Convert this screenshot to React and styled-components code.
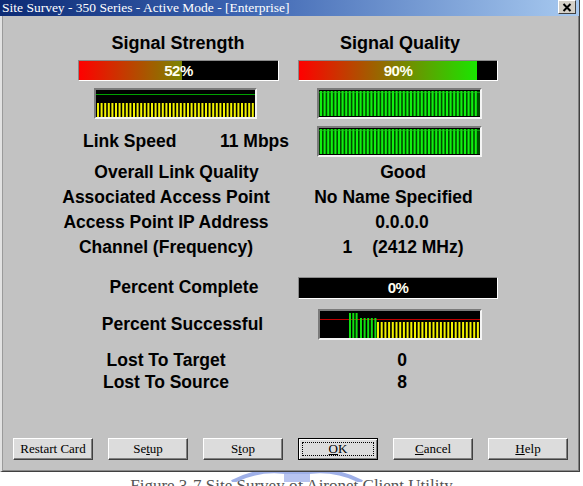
import React from 'react';
import styled, { createGlobalStyle, css } from 'styled-components';

const GlobalStyle = createGlobalStyle`
  html, body { margin: 0; padding: 0; background: #fff; width: 583px; height: 486px; overflow: hidden; }
  #root { width: 583px; height: 486px; }
`;

const Page = styled.div`
  width: 583px;
  height: 486px;
  display: flex;
  flex-direction: column;
  font-family: "Liberation Sans", Arial, sans-serif;
  color: #000;
`;

const Window = styled.div`
  width: 580px;
  height: 476px;
  box-sizing: border-box;
  display: flex;
  flex-direction: column;
  border-right: 1px solid #404040;
  box-shadow: inset -1px 0 0 #808080;
  background: #c2c2c2;
`;

const TitleBar = styled.div`
  height: 16px;
  flex: none;
  display: flex;
  align-items: center;
  justify-content: space-between;
  padding: 0 3px 0 2px;
  background: linear-gradient(to right, #0c2a74 0%, #3a62b0 40%, #a8caf0 100%);
`;

const TitleText = styled.span`
  font-family: "Liberation Serif", "Times New Roman", serif;
  font-size: 13.5px;
  line-height: 16px;
  color: #fff;
  white-space: nowrap;
`;

const CloseBox = styled.div`
  width: 18px;
  height: 14px;
  box-sizing: border-box;
  align-self: flex-start;
  display: flex;
  align-items: center;
  justify-content: center;
  background: #d4d0c8;
  border: 1px solid;
  border-color: #fff #404040 #404040 #fff;
`;

const Body = styled.div`
  flex: 1;
  display: flex;
  flex-direction: column;
  padding-top: 17px;
  border-left: 2px solid #e2e2e2;
  border-bottom: 1px solid #404040;
  box-shadow: inset 1px 0 0 #9a9a9a, inset 0 -1px 0 #8a8a8a;
`;

const SignalGrid = styled.div`
  margin-left: 56px;
  display: grid;
  grid-template-columns: 240px 200px;
  row-gap: 7px;
  align-items: center;
`;

const Heading = styled.div`
  font-size: 18px;
  font-weight: bold;
  line-height: 20px;
  text-align: center;
  padding-left: ${p => (p.$shift || 0) * 2}px;
`;

const Meter = styled.div`
  display: grid;
  width: ${p => p.$w}px;
  height: ${p => p.$h}px;
  box-sizing: border-box;
  margin-left: ${p => p.$inset || 0}px;
  background: #000;
  border: 1px solid;
  border-color: #8a8a8a #fff #fff #8a8a8a;
  & > * { grid-area: 1 / 1; }
`;

const MeterFill = styled.div`
  height: 100%;
  background-image: linear-gradient(to right, #ff0000, #00ff00);
  background-repeat: no-repeat;
`;

const MeterText = styled.div`
  align-self: center;
  justify-self: center;
  color: #fffff0;
  font-size: 15px;
  font-weight: bold;
  line-height: 15px;
  letter-spacing: -0.5px;
`;

const ScopeBox = styled.div`
  width: ${p => p.$w}px;
  height: ${p => p.$h}px;
  box-sizing: border-box;
  margin-left: ${p => p.$inset || 0}px;
  border: 2px solid;
  border-color: #7a7a7a #f4f4f4 #f4f4f4 #7a7a7a;
  background: #000;
  & > svg { display: block; }
`;

const LinkSpeed = styled.div`
  display: flex;
  justify-content: space-between;
  align-items: center;
  padding: 0 9px 0 25px;
  font-size: 17.5px;
  font-weight: bold;
`;

const InfoRow = styled.div`
  margin-left: 38px;
  margin-top: ${p => p.$top || 0}px;
  height: ${p => p.$h}px;
  display: grid;
  grid-template-columns: 252px 220px;
  align-items: center;
  font-size: 17.5px;
  font-weight: bold;
  line-height: 25px;
`;

const Label = styled.div`
  text-align: center;
  white-space: nowrap;
  padding-left: ${p => Math.max(0, (p.$shift || 0) * 2)}px;
  padding-right: ${p => Math.max(0, -(p.$shift || 0) * 2)}px;
`;

const Value = styled(Label)``;

const ChannelValue = styled.div`
  display: flex;
  justify-content: center;
  gap: 20px;
  white-space: nowrap;
  padding-left: 2px;
`;

const ButtonRow = styled.div`
  margin-top: 46px;
  margin-left: 11px;
  display: flex;
  gap: 15px;
`;

const Btn = styled.button`
  width: 80px;
  height: 22px;
  box-sizing: border-box;
  padding: 0;
  font-family: "Liberation Serif", "Times New Roman", serif;
  font-size: 13px;
  color: #000;
  background: #dcdcdc;
  border: 1px solid;
  border-color: #fff #404040 #404040 #fff;
  box-shadow: inset -1px -1px 0 #808080;
  cursor: default;
  u { text-decoration: underline; }
  ${p => p.$default && css`
    border-color: #000;
    box-shadow: inset 1px 1px 0 #fff, inset -1px -1px 0 #808080;
    outline: 1px dotted #000;
    outline-offset: -5px;
  `}
`;

const Caption = styled.div`
  position: relative;
  height: 10px;
  display: flex;
  justify-content: center;
  font-family: "Liberation Serif", "Times New Roman", serif;
  font-size: 17px;
  line-height: 20px;
  color: #555;
  padding-top: 4px;
  white-space: nowrap;
`;

const Watermark = styled.svg`
  position: absolute;
  left: 222px;
  top: 0;
`;

function bars(x0, x1, pitch) {
  const out = [];
  for (let x = x0; x <= x1 - 1.5; x += pitch) out.push(x);
  return out;
}

function StrengthScope() {
  return (
    <ScopeBox $w={163} $h={31} $inset={36}>
      <svg width="159" height="27">
        <rect x="0" y="4" width="159" height="1" fill="#00a000" />
        {bars(1, 158, 3.6).map((x, i) => (
          <rect key={i} x={x} y="13" width="2" height="14" fill="#f2f200" />
        ))}
      </svg>
    </ScopeBox>
  );
}

function GreenScope({ inset }) {
  return (
    <ScopeBox $w={165} $h={31} $inset={inset}>
      <svg width="161" height="27">
        <rect x="0" y="1" width="161" height="25" fill="#004a00" />
        {bars(1, 160, 3.6).map((x, i) => (
          <rect key={i} x={x} y="1" width="2" height="25" fill="#10f010" />
        ))}
        <rect x="0" y="2" width="161" height="1" fill="#20c020" opacity="0.6" />
      </svg>
    </ScopeBox>
  );
}

function SuccessScope() {
  return (
    <ScopeBox $w={164} $h={31} $inset={26}>
      <svg width="160" height="27">
        <rect x="0" y="8" width="160" height="1" fill="#c00000" />
        {bars(29, 39, 3.3).map((x, i) => (
          <rect key={'a' + i} x={x} y="2" width="2" height="25" fill="#10e010" />
        ))}
        {bars(40, 57, 3.6).map((x, i) => (
          <rect key={'b' + i} x={x} y="7" width="2" height="20" fill="#10e010" />
        ))}
        {bars(57, 159, 3.7).map((x, i) => (
          <rect key={'c' + i} x={x} y="11" width="2" height="16" fill="#f2f200" />
        ))}
      </svg>
    </ScopeBox>
  );
}

function PercentBar({ value, w, h, inset }) {
  return (
    <Meter $w={w} $h={h} $inset={inset}>
      {value > 0 && (
        <MeterFill style={{ width: value + '%', backgroundSize: (10000 / value) + '% 100%' }} />
      )}
      <MeterText>{value}%</MeterText>
    </Meter>
  );
}

export default function App() {
  return (
    <Page>
      <GlobalStyle />
      <Window>
        <TitleBar>
          <TitleText>Site Survey - 350 Series - Active Mode - [Enterprise]</TitleText>
          <CloseBox>
            <svg width="10" height="9" viewBox="0 0 10 9">
              <path d="M1.5 1 L8.5 8 M8.5 1 L1.5 8" stroke="#000" strokeWidth="2" />
            </svg>
          </CloseBox>
        </TitleBar>
        <Body>
          <SignalGrid>
            <Heading>Signal Strength</Heading>
            <Heading $shift={2}>Signal Quality</Heading>
            <PercentBar value={52} w={201} h={21} inset={20} />
            <PercentBar value={90} w={200} h={21} inset={0} />
            <StrengthScope />
            <GreenScope inset={19} />
            <LinkSpeed>
              <span>Link Speed</span>
              <span>11 Mbps</span>
            </LinkSpeed>
            <GreenScope inset={19} />
          </SignalGrid>

          <InfoRow $top={3} $h={25}>
            <Label $shift={10.5}>Overall Link Quality</Label>
            <Value $shift={1}>Good</Value>
          </InfoRow>
          <InfoRow $h={25}>
            <Label>Associated Access Point</Label>
            <Value $shift={-8.5}>No Name Specified</Value>
          </InfoRow>
          <InfoRow $h={25}>
            <Label>Access Point IP Address</Label>
            <Value>0.0.0.0</Value>
          </InfoRow>
          <InfoRow $h={25}>
            <Label>Channel (Frequency)</Label>
            <ChannelValue>
              <span>1</span>
              <span>(2412 MHz)</span>
            </ChannelValue>
          </InfoRow>

          <InfoRow $top={15} $h={22}>
            <Label $shift={18}>Percent Complete</Label>
            <PercentBar value={0} w={200} h={22} inset={6} />
          </InfoRow>
          <InfoRow $top={12} $h={31}>
            <Label $shift={16.5}>Percent Successful</Label>
            <SuccessScope />
          </InfoRow>
          <InfoRow $top={8} $h={22}>
            <Label>Lost To Target</Label>
            <Value>0</Value>
          </InfoRow>
          <InfoRow $h={22}>
            <Label>Lost To Source</Label>
            <Value>8</Value>
          </InfoRow>

          <ButtonRow>
            <Btn>Restart Card</Btn>
            <Btn>Se<u>t</u>up</Btn>
            <Btn>S<u>t</u>op</Btn>
            <Btn $default><u>O</u>K</Btn>
            <Btn><u>C</u>ancel</Btn>
            <Btn><u>H</u>elp</Btn>
          </ButtonRow>
        </Body>
      </Window>
      <Caption>
        <Watermark width="150" height="10" viewBox="0 0 150 10">
          <path d="M10 10 Q40 -6 75 2 Q110 -6 140 10" fill="none" stroke="#9fb0e8" strokeWidth="4" />
          <rect x="62" y="2" width="26" height="8" fill="#b8c4f0" />
        </Watermark>
        <span>Figure 3-7 Site Survey of Aironet Client Utility</span>
      </Caption>
    </Page>
  );
}
